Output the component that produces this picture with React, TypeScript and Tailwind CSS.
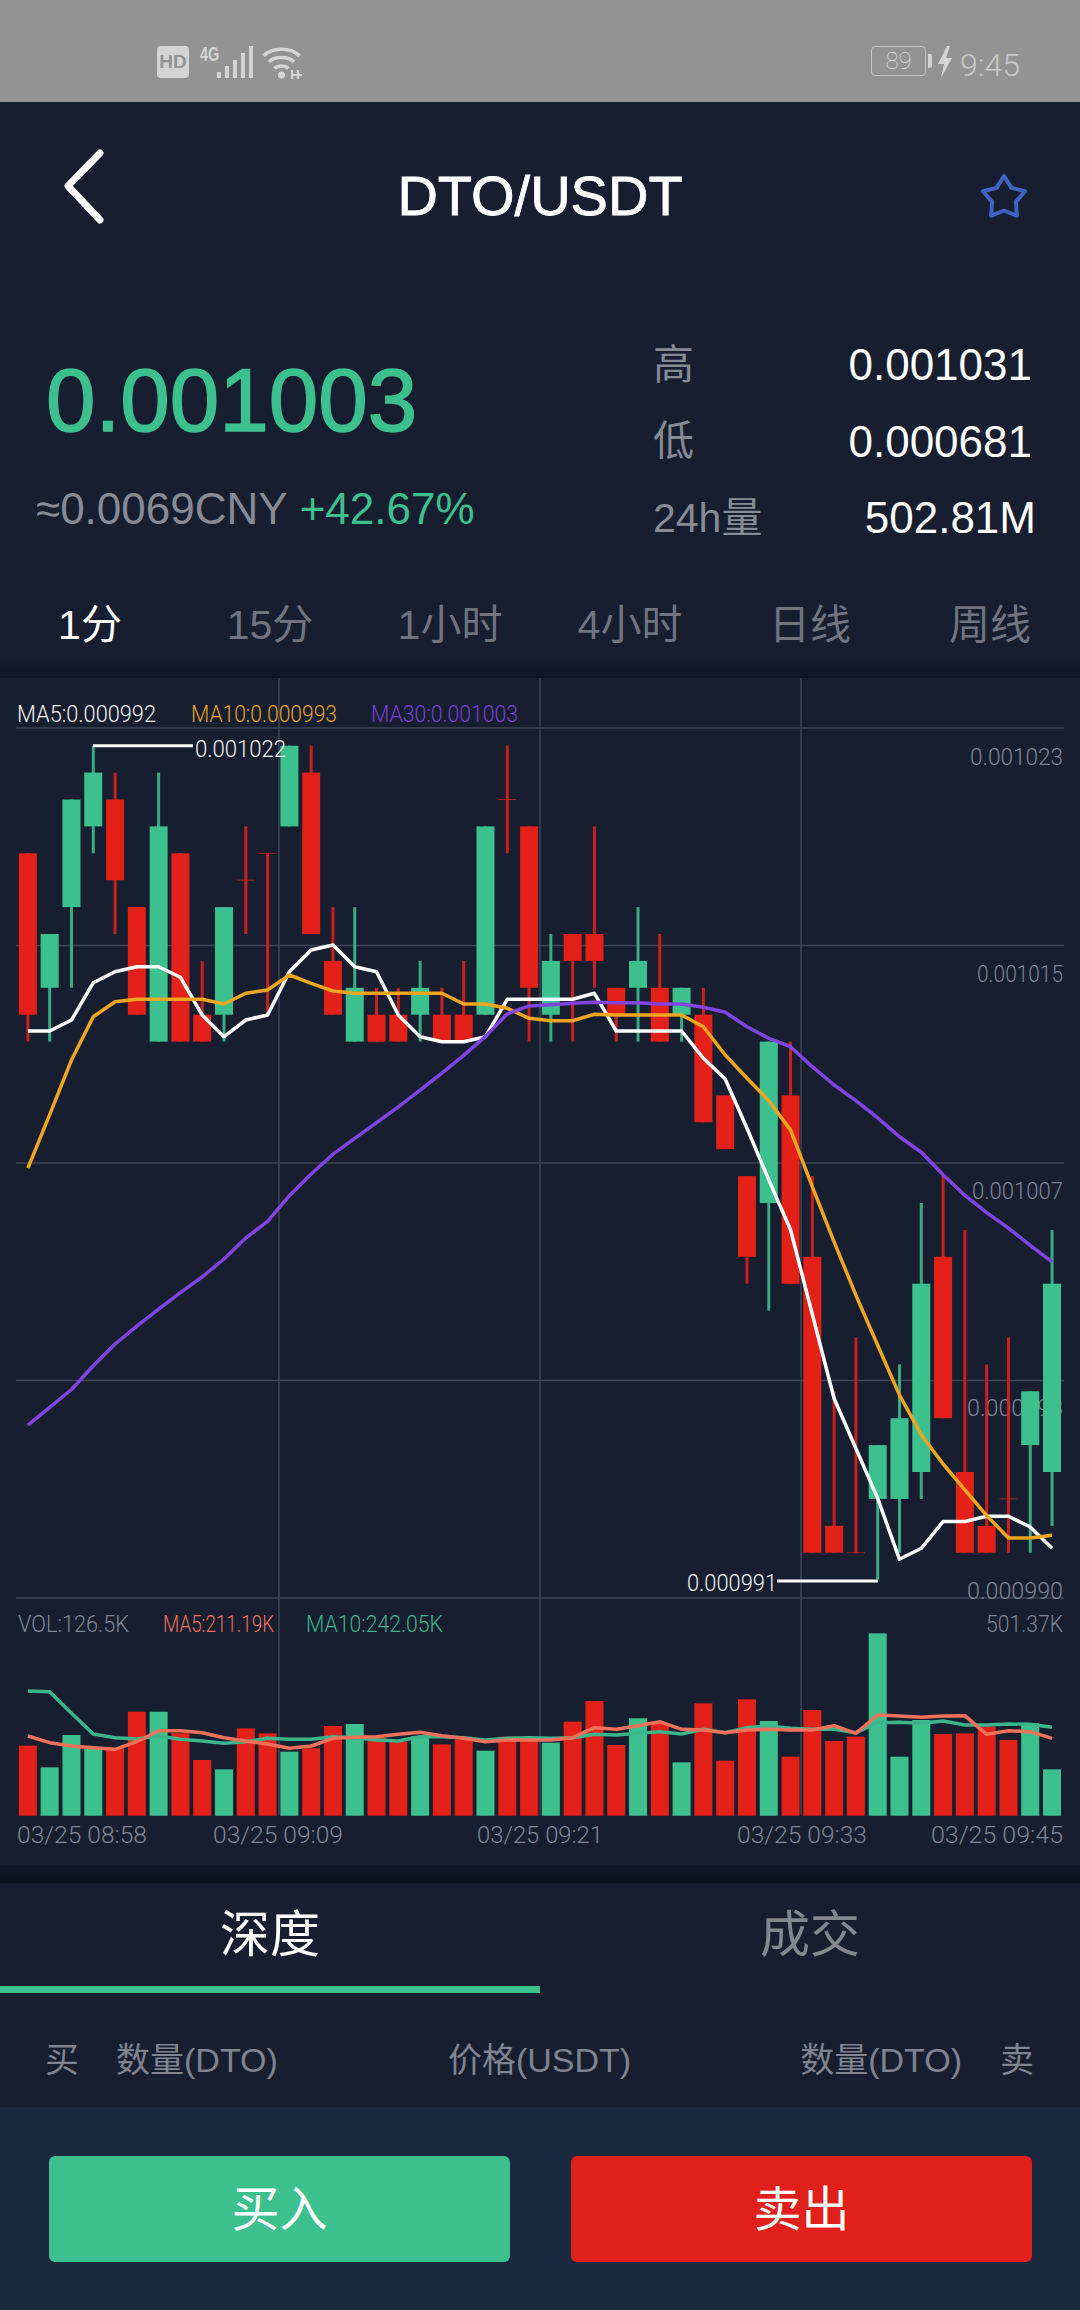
const GREEN = "#3cc08e";
const RED = "#e32119";
const X0 = 27.9;
const STEP = 21.79;
const TICK0 = 745.7;
const TICK = 26.9;

const cx = (i: number) => X0 + STEP * i;
const ty = (level: number) => TICK0 + TICK * level;

// [body top, body bottom, high, low, colour] in price ticks under the high
type Candle = [number, number, number, number, "g" | "r"];
const candles: Candle[] = [
  [4, 10, 4, 11, "r"], [7, 9, 7, 11, "g"], [2, 6, 2, 9, "g"], [1, 3, 0, 4, "g"], [2, 5, 1, 7, "r"], [6, 10, 6, 10, "r"],
  [3, 11, 1, 11, "g"], [4, 11, 4, 11, "r"], [10, 11, 8, 11, "r"], [6, 10, 6, 11, "g"], [5, 5, 3, 7, "r"], [4, 4, 4, 10, "r"],
  [0, 3, 0, 3, "g"], [1, 7, 0, 7, "r"], [8, 10, 6, 10, "r"], [9, 11, 6, 11, "g"], [10, 11, 9, 11, "r"], [10, 11, 9, 11, "r"],
  [9, 10, 8, 11, "g"], [10, 11, 9, 11, "r"], [10, 11, 8, 11, "r"], [3, 10, 3, 10, "g"], [2, 2, 0, 4, "r"], [3, 9, 3, 11, "r"],
  [8, 10, 7, 11, "g"], [7, 8, 7, 11, "r"], [7, 8, 3, 9, "r"], [9, 10, 9, 11, "r"], [8, 9, 6, 11, "g"], [9, 11, 7, 11, "r"],
  [9, 10, 9, 11, "g"], [10, 14, 9, 14, "r"], [13, 15, 13, 15, "r"], [16, 19, 16, 20, "r"], [11, 17, 11, 21, "g"], [13, 20, 11, 20, "r"],
  [19, 30, 16, 30, "r"], [29, 30, 24, 30, "r"], [30, 30, 22, 30, "r"], [26, 28, 26, 31, "g"], [25, 28, 23, 30, "g"], [20, 27, 17, 28, "g"],
  [19, 25, 16, 25, "r"], [27, 30, 18, 30, "r"], [29, 30, 23, 30, "r"], [28, 28, 22, 30, "r"], [24, 26, 24, 30, "g"], [20, 27, 18, 29, "g"],
];

const y3 = (v: number) => 680 + v / 3;
const y5 = (v: number) => 1080 + v / 2.904;
const y9 = (v: number) => 1000 + v / 2.529;
const yv = (v: number) => 1590 + v / 3;

const ma5 = [
  ...[1053, 1053, 1020, 908, 875, 860, 860, 892, 1005, 1070, 1020, 1005, 875, 810, 795, 860, 875, 1005, 1070, 1085, 1085, 1070, 958, 958, 958, 958, 940, 1053, 1053, 1053, 1053, 1135].map(y3),
  ...[-3, 140, 290, 435, 680, 925, 1070, 1215, 1392, 1360, 1282, 1282, 1267, 1267, 1298, 1360].map(y5),
];
const ma10 = [
  ...[425, 290].map(y9),
  ...[1140, 1010, 965, 958, 958, 958, 958, 972, 940, 930, 885, 910, 933, 940, 940, 940, 940, 940, 972, 972, 985, 1015, 1022, 1022, 1003, 1005, 1005, 1005, 1005, 1040, 1125, 1195].map(y3),
  ...[60, 145, 310, 470, 625, 770, 915, 1030, 1115, 1190, 1265, 1330, 1330, 1322].map(y5),
];
const ma30 = [
  ...[1075, 1030, 985, 925, 870, 825, 782, 740, 700, 655, 602, 560, 495, 440, 390, 350, 310, 270, 228, 185, 140, 92, 35, 15, 12].map(y9),
  ...[970, 967, 968, 968, 972, 972, 982, 997, 1040, 1075, 1100, 1160, 1215].map(y3),
  ...[60, 110, 165, 210, 275, 335, 385, 430, 480, 528].map(y5),
];

const volTops: [number, "g" | "r"][] = [
  [467, "r"], [532, "g"], [435, "g"], [475, "g"], [475, "r"], [365, "r"], [365, "g"], [430, "r"], [510, "r"], [538, "g"], [415, "r"], [430, "r"],
  [485, "g"], [475, "r"], [408, "r"], [402, "g"], [440, "r"], [455, "r"], [438, "g"], [463, "r"], [448, "r"], [482, "g"], [440, "r"], [448, "r"],
  [458, "g"], [395, "r"], [333, "r"], [465, "r"], [385, "g"], [400, "r"], [517, "g"], [340, "r"], [512, "r"], [328, "r"], [393, "g"], [500, "r"],
  [360, "r"], [453, "r"], [440, "r"], [130, "g"], [500, "g"], [390, "g"], [432, "r"], [430, "r"], [410, "r"], [450, "r"], [400, "g"], [538, "g"],
];
const volMa5 = [438, 458, 468, 473, 478, 455, 422, 422, 428, 443, 453, 462, 475, 468, 445, 442, 440, 433, 427, 437, 445, 455, 450, 450, 450, 443, 413, 418, 407, 395, 418, 420, 428, 420, 418, 420, 420, 407, 430, 375, 378, 382, 378, 377, 433, 422, 425, 445].map(yv);
const volMa10 = [303, 305, 370, 432, 443, 447, 438, 448, 453, 460, 455, 445, 448, 448, 440, 443, 450, 453, 440, 440, 443, 450, 445, 443, 445, 443, 433, 435, 430, 425, 432, 418, 428, 413, 408, 415, 418, 418, 428, 398, 397, 400, 393, 405, 405, 402, 403, 412].map(yv);

const points = (ys: number[]) => ys.map((y, i) => `${cx(i).toFixed(1)},${y.toFixed(1)}`).join(" ");

function Label({ x, y, w, fill, children }: { x: number; y: number; w: number; fill: string; children: string }) {
  return (
    <text x={x} y={y + 8.5} textLength={w} lengthAdjust="spacingAndGlyphs" fill={fill} fontSize={24} fontWeight={300} fontFamily="Roboto, 'Liberation Sans', sans-serif">
      {children}
    </text>
  );
}

function KlineChart() {
  const axis = "#7f8593";
  return (
    <svg width={1080} height={1187} viewBox="0 678 1080 1187" className="block h-[1187px] w-[1080px]">
      {[728, 945.5, 1163, 1380.5, 1598].map((y) => (
        <line key={y} x1={16} x2={1064} y1={y} y2={y} stroke="#3d4454" strokeWidth={1.5} />
      ))}
      {[279, 540, 801].map((x) => (
        <line key={x} x1={x} x2={x} y1={678} y2={1815} stroke="#3d4454" strokeWidth={1.5} />
      ))}

      <Label x={17} y={713} w={139} fill="#f2f2f2">MA5:0.000992</Label>
      <Label x={191} y={713} w={146} fill="#e8a422">MA10:0.000993</Label>
      <Label x={371} y={713} w={147} fill="#7a3fd6">MA30:0.001003</Label>

      <Label x={970} y={756} w={93} fill={axis}>0.001023</Label>
      <Label x={977} y={973} w={86} fill={axis}>0.001015</Label>
      <Label x={972} y={1190} w={91} fill={axis}>0.001007</Label>
      <Label x={967} y={1407} w={96} fill={axis}>0.000998</Label>
      <Label x={967} y={1590} w={96} fill={axis}>0.000990</Label>

      {candles.map(([top, bottom, high, low, c], i) => {
        const color = c === "g" ? GREEN : RED;
        const x = cx(i);
        return (
          <g key={i}>
            <rect x={x - 1.5} y={ty(high)} width={3} height={ty(low) - ty(high)} fill={color} opacity={0.88} />
            {top === bottom ? (
              <rect x={x - 9} y={ty(top) - 0.5} width={18} height={1} fill={color} opacity={0.7} />
            ) : (
              <rect x={x - 9} y={ty(top)} width={18} height={ty(bottom) - ty(top)} fill={color} />
            )}
          </g>
        );
      })}

      <polyline points={points(ma5)} fill="none" stroke="#ffffff" strokeWidth={3.5} strokeLinejoin="round" />
      <polyline points={points(ma10)} fill="none" stroke="#eea51f" strokeWidth={3.5} strokeLinejoin="round" />
      <polyline points={points(ma30)} fill="none" stroke="#8144e0" strokeWidth={3.5} strokeLinejoin="round" />

      <path d="M93 745.7H193" stroke="#ffffff" strokeWidth={3} />
      <Label x={195} y={748} w={91} fill="#f2f2f2">0.001022</Label>
      <path d="M777 1581H877.7" stroke="#ffffff" strokeWidth={3} />
      <Label x={687} y={1582} w={90} fill="#f2f2f2">0.000991</Label>

      <Label x={18} y={1623} w={111} fill={axis}>VOL:126.5K</Label>
      <Label x={163} y={1623} w={111} fill="#f0705a">MA5:211.19K</Label>
      <Label x={306} y={1623} w={137} fill="#3cb48c">MA10:242.05K</Label>
      <Label x={986} y={1623} w={77} fill={axis}>501.37K</Label>

      {volTops.map(([top, c], i) => (
        <rect key={i} x={cx(i) - 9} y={yv(top)} width={18} height={1815.7 - yv(top)} fill={c === "g" ? GREEN : RED} />
      ))}
      <polyline points={points(volMa10)} fill="none" stroke="#3cb48c" strokeWidth={3.5} strokeLinejoin="round" />
      <polyline points={points(volMa5)} fill="none" stroke="#f0705a" strokeWidth={3.5} strokeLinejoin="round" />

      <Label x={17} y={1834} w={130} fill={axis}>03/25 08:58</Label>
      <Label x={213} y={1834} w={130} fill={axis}>03/25 09:09</Label>
      <Label x={477} y={1834} w={126} fill={axis}>03/25 09:21</Label>
      <Label x={737} y={1834} w={130} fill={axis}>03/25 09:33</Label>
      <Label x={931} y={1834} w={132} fill={axis}>03/25 09:45</Label>
    </svg>
  );
}

function StatusBar() {
  return (
    <div className="flex h-[102px] items-start justify-between bg-[#939393] pt-[46px] pr-[60px] pl-[157px] text-[#d4d4d4]">
      <div className="flex items-start">
        <span className="flex h-[32px] w-[32px] items-center justify-center rounded-[4px] bg-[#d4d4d4] text-[19px] font-bold text-[#939393]">HD</span>
        <span className="mt-[-1px] ml-[11px] w-[18px] origin-top-left scale-x-[0.8] scale-y-[1.15] text-[18px] leading-[16px] font-bold">4G</span>
        <svg width={36} height={34} viewBox="0 0 36 34" className="-ml-[1px]">
          <rect x={0} y={26} width={4} height={6} fill="#d4d4d4" />
          <rect x={8} y={20} width={4} height={12} fill="#d4d4d4" />
          <rect x={16} y={14} width={4} height={18} fill="#d4d4d4" />
          <rect x={24} y={7} width={4} height={25} fill="#d4d4d4" />
          <rect x={32} y={0} width={4} height={32} fill="#d4d4d4" />
        </svg>
        <svg width={42} height={34} viewBox="0 0 42 34" className="ml-[9px]">
          <g fill="none" stroke="#d4d4d4" strokeWidth={3.5}>
            <path d="M1.5 10C9.5 1 29.5 1 37.5 10" />
            <path d="M7 16C12.5 10 26.5 10 32 16" />
            <path d="M12.5 22.5C16 19 23 19 26.5 22.5" />
          </g>
          <circle cx={19.5} cy={29} r={3.5} fill="#d4d4d4" />
          <path d="M30 33V24M36 33V24M30 29H40" stroke="#d4d4d4" strokeWidth={2.2} fill="none" />
        </svg>
      </div>
      <div className="flex items-start font-['Roboto',sans-serif]">
        <span className="flex h-[30px] w-[55px] items-center justify-center rounded-[4px] border-[1.5px] border-[#c4c4c4] text-[24px] font-thin text-[#e0e0e0]">89</span>
        <span className="mt-[8px] ml-[2px] h-[14px] w-[4px] rounded-r-[2px] bg-[#d4d4d4]" />
        <svg width={16} height={32} viewBox="0 0 16 32" className="ml-[5px]">
          <path d="M10 0 1 18H7L4 32 15 12H9L13 0Z" fill="#d4d4d4" />
        </svg>
        <span className="mt-[4px] ml-[7px] text-[32px] leading-[30px] font-light text-[#c8c8c8]">9:45</span>
      </div>
    </div>
  );
}

const stats = [
  { label: "高", value: "0.001031", shift: "mr-[4px]" },
  { label: "低", value: "0.000681", shift: "mr-[4px]" },
  { label: "24h量", value: "502.81M", shift: "mr-0" },
];

const periods = ["1分", "15分", "1小时", "4小时", "日线", "周线"];

export default function App() {
  return (
    <div className="flex h-[2310px] w-[1080px] flex-col overflow-hidden bg-[#161e30] font-['Liberation_Sans','Noto_Sans_CJK_SC',sans-serif] text-white">
      <StatusBar />

      <header className="grid h-[188px] grid-cols-[1fr_auto_1fr] items-center px-[47px]">
        <svg width={48} height={76} viewBox="0 0 48 76" className="-mt-[18px] ml-[13px]">
          <path d="M40 4 8 37 40 71" fill="none" stroke="#ffffff" strokeWidth={7} strokeLinecap="round" strokeLinejoin="round" />
        </svg>
        <h1 className="text-[56px] [-webkit-text-stroke:0.8px_#ffffff]">DTO/USDT</h1>
        <svg width={48} height={46} viewBox="0 0 48 46" className="mr-[5px] justify-self-end">
          <path d="M24 3 31.4 14.9 44.9 18.2 35.9 28.9 36.9 42.8 24 37.5 11.1 42.8 12.1 28.9 3.1 18.2 16.6 14.9Z" fill="none" stroke="#3f63c4" strokeWidth={4} strokeLinejoin="round" />
        </svg>
      </header>

      <section className="flex h-[300px]">
        <div className="w-[653px] pt-[56px]">
          <div className="pl-[46px] text-[89px] leading-[108px] text-[#3cc08e] [-webkit-text-stroke:1.5px_#3cc08e]">0.001003</div>
          <div className="mt-[31px] flex items-baseline gap-[12px] pl-[36px] text-[44px] leading-[48px] text-[#868b96]">
            <span>≈0.0069CNY</span>
            <span className="text-[#3cc08e]">+42.67%</span>
          </div>
        </div>
        <div className="flex w-[383px] flex-col pt-[37px]">
          {stats.map((row) => (
            <div key={row.label} className="flex h-[76.5px] items-center justify-between text-[41px]">
              <span className="text-[#868b96]">{row.label}</span>
              <span className={`text-[44px] ${row.shift}`}>{row.value}</span>
            </div>
          ))}
        </div>
      </section>

      <nav className="grid h-[70px] grid-cols-6 items-center pt-[2px] text-center text-[41px] text-[#6f7480]">
        {periods.map((p, i) => (
          <span key={p} className={i === 0 ? "text-white" : ""}>{p}</span>
        ))}
      </nav>

      <div className="h-[18px] bg-linear-to-b from-[#161e30] to-[#0d1522]" />
      <KlineChart />
      <div className="h-[18px] bg-linear-to-b from-[#121a2a] to-[#0b1320]" />

      <div className="grid h-[110px] grid-cols-2 text-center text-[50px]">
        <div className="flex flex-col">
          <span className="flex flex-1 items-center justify-center pt-[2px]">深度</span>
          <span className="h-[7px] bg-[#3cc08e]" />
        </div>
        <div className="flex flex-col text-[#83878f]">
          <span className="flex flex-1 items-center justify-center pt-[2px]">成交</span>
          <span className="h-[7px]" />
        </div>
      </div>

      <div className="flex h-[114px] items-center justify-between whitespace-nowrap pt-[20px] pr-[46px] pl-[45px] text-[34px] text-[#7f8490]">
        <div className="flex w-[232px] gap-[37px]">
          <span>买</span>
          <span>数量(DTO)</span>
        </div>
        <span>价格(USDT)</span>
        <div className="flex w-[232px] justify-end gap-[38px]">
          <span>数量(DTO)</span>
          <span>卖</span>
        </div>
      </div>

      <footer className="flex flex-1 items-start justify-between bg-[#1b2940] pt-[49px] pr-[48px] pl-[49px] text-[48px]">
        <button className="flex h-[106px] w-[461px] items-center justify-center rounded-[6px] bg-[#3cc08e] pt-[2px] text-white">买入</button>
        <button className="flex h-[106px] w-[461px] items-center justify-center rounded-[6px] bg-[#e1201b] pt-[2px] text-white">卖出</button>
      </footer>
    </div>
  );
}
